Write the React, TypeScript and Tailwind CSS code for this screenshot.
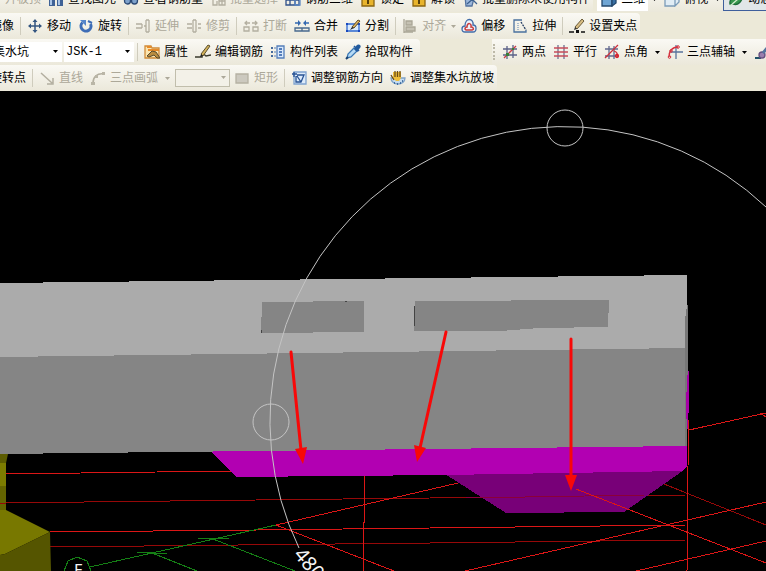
import React from "react";
import clsx from "clsx";

type IconProps = { children: React.ReactNode };

const Svg = ({ children }: IconProps) => (
  <svg viewBox="0 0 16 16" className="size-4 shrink-0" fill="none" strokeWidth="1.3" aria-hidden="true">
    {children}
  </svg>
);

const icons: Record<string, React.ReactNode> = {
  blank: null,
  binoculars: (
    <>
      <path d="M1 5h6v10H1zM9 5h6v10H9z" fill="#3f6296" />
      <path d="M3 7v7M11 7v7" stroke="#a9c4e6" strokeWidth="2" />
      <path d="M6 8h4" stroke="#24406c" strokeWidth="2" />
    </>
  ),
  glasses: (
    <>
      <circle cx="4.500" cy="10" r="3" fill="#7ea2cc" stroke="#2c4a75" />
      <circle cx="11.500" cy="10" r="3" fill="#7ea2cc" stroke="#2c4a75" />
      <path d="M7 9h2" stroke="#2c4a75" strokeWidth="2" />
    </>
  ),
  batch: <path d="M1 2h6v6H1zM9 6h6v8H9zM3 9v5h4v-4M9 10h6M12 6v8" stroke="#b3afa0" />,
  beam: (
    <>
      <path d="M1 3h13v11H1zM5 3v11M10 3v11M1 9h13" stroke="#31518a" />
      <path d="M10 8h5v6h-5z" stroke="#5c88c4" />
    </>
  ),
  lock: (
    <>
      <path d="M5 7V4a3 3 0 0 1 6 0v3" stroke="#96721a" />
      <path d="M2 6h12v9H2z" fill="#e8b42c" stroke="#8b6511" />
      <path d="M3 8h9" stroke="#fbe38b" />
      <path d="M8 9v4" stroke="#57400b" strokeWidth="2" />
    </>
  ),
  trash: (
    <>
      <path d="M3 5l9 2-2 8H4z" fill="#9db8dc" stroke="#54739f" />
      <path d="M9 7l6 6M5 13l8-7" stroke="#3d618f" />
    </>
  ),
  cube: (
    <>
      <path d="M1 5l4-3h10l-4 3z" fill="#c9e3f6" stroke="#24486d" />
      <path d="M1 5h10v10H1z" fill="#6fa5d4" stroke="#24486d" />
      <path d="M11 5l4-3v10l-4 3z" fill="#3870a5" stroke="#24486d" />
    </>
  ),
  topview: (
    <>
      <path d="M1 7l4-4h10l-4 4z" fill="#7fb1d6" stroke="#6289ad" />
      <path d="M1 7h10v8H1zM11 7l4-4v8l-4 4z" fill="#e1edf5" stroke="#7c9cb8" />
    </>
  ),
  orbit: (
    <>
      <path d="M2 13C1 7 7 5 14 4c1 6-4 11-9 9z" fill="#36974d" stroke="#1d6c39" />
      <path d="M2 15l8-7" stroke="#d3efcf" />
    </>
  ),
  move: (
    <>
      <path d="M8 2v12M2 8h12" stroke="#345681" strokeWidth="1.500" />
      <path d="M5.500 4L8 1l2.500 3zM5.500 12L8 15l2.500-3zM4 5.500L1 8l3 2.500zM12 5.500L15 8l-3 2.500z" fill="#345681" />
    </>
  ),
  rotate: (
    <>
      <path d="M4.500 4.500a5 5 0 1 0 8 1.500" stroke="#3e6db6" strokeWidth="3" />
      <path d="M2 2h6v6z" fill="#5585ca" />
      <path d="M10 3l4 2" stroke="#3e6db6" strokeWidth="2" />
    </>
  ),
  extend: <path d="M1 6h6M1 10h6M7 6v4M9 8h2M11 2v12M14 2v12M11 2h3M11 14h3" stroke="#b3afa0" />,
  trim: <path d="M1 6h5M1 10h5M7 2v12M10 2v12M7 2h3M7 14h3M12 6h3M12 10h3" stroke="#b3afa0" />,
  breakOff: <path d="M1 9h5v4H1zM10 9h5v4h-5zM2 5h5M9 5h5M4 3L2 5l2 2M12 3l2 2-2 2" stroke="#b3afa0" />,
  merge: (
    <>
      <path d="M1 10h14v3H1zM8 10v3" stroke="#48698e" />
      <path d="M1 5h5M10 5h5" stroke="#3569b0" strokeWidth="1.500" />
      <path d="M4 2l3 3-3 3zM12 2L9 5l3 3z" fill="#3569b0" />
    </>
  ),
  split: (
    <>
      <path d="M2 6h12v7H2z" fill="#dbeafb" stroke="#2e68d0" />
      <path d="M1 5h2v2H1zM13 5h2v2h-2zM1 12h2v2H1zM13 12h2v2h-2z" fill="#1848bd" />
      <path d="M7 9l6-7 2 1-6 7z" fill="#dfb65e" stroke="#614c24" strokeWidth="1" />
      <path d="M5 12l2-3 2 1z" fill="#222" />
    </>
  ),
  align: (
    <>
      <path d="M2 1v14M2 14h9" stroke="#aaa696" />
      <path d="M4 3h6v4H4zM4 9h9v4H4z" fill="#c5c1b3" stroke="#aaa696" />
    </>
  ),
  offset: (
    <>
      <path d="M1 11c0-2 1-3 3-3 0-9 9-8 8-1 4 0 4 7 0 7H4c-2 0-3-1-3-3z" fill="#edf3fb" stroke="#426ca8" />
      <path d="M4 11c0-1 1-2 2-2 0-5 5-4 4 0 3 0 3 3 1 3H5z" stroke="#c93c3c" strokeWidth="1.500" />
    </>
  ),
  stretch: (
    <>
      <path d="M10 2H2v12h12v-2" stroke="#4b719f" />
      <path d="M9 4l5 8" stroke="#263e63" strokeDasharray="2 1" />
      <path d="M6 5v8" stroke="#7f9cc0" strokeDasharray="1 1" />
    </>
  ),
  grip: (
    <>
      <path d="M0 14h5M12 14h4" stroke="#111" />
      <path d="M7 12h3v3H7z" fill="#111" />
      <path d="M6 9l7-8 2 2-7 8z" fill="#d8bd83" stroke="#6b5c3b" strokeWidth="1" />
      <path d="M5 12l1-3 2 2z" fill="#333" />
    </>
  ),
  props: (
    <>
      <path d="M1 2h6l1 2h7v10H1z" fill="#fbe5af" stroke="#d08b39" />
      <path d="M4 6h11M3 3h4" stroke="#e78a29" strokeWidth="2" />
      <path d="M3 12l5-5 4 1 4 6h-3l-3-3-5 2z" fill="#b98c40" stroke="#574a2c" strokeWidth="1" />
    </>
  ),
  editBar: (
    <>
      <path d="M0 13h7c0-3 2-3 4-1l5-1" stroke="#3a3a2c" strokeWidth="1.500" />
      <path d="M6 10l7-9 2 1-7 10z" fill="#d2b15a" stroke="#5c502d" strokeWidth="1" />
      <path d="M5 13l1-3 2 2z" fill="#222" />
    </>
  ),
  list: (
    <>
      <path d="M7 2h7v12H7z" fill="#d9e9fb" stroke="#557fba" />
      <path d="M9 5h3M9 8h3M9 11h3" stroke="#295aa6" />
      <path d="M1 3h2v2H1zM1 7h2v2H1zM1 11h2v2H1z" fill="#456b9d" />
      <path d="M4 4h2M4 8h2M4 12h2" stroke="#8ca5c6" />
    </>
  ),
  pick: (
    <>
      <path d="M2 14l1-4 6-6 3 3-6 6z" fill="#b6daf5" stroke="#3b79b5" />
      <path d="M9 2l5 5M10 5l2-3c2-2 4 0 2 2l-2 3z" fill="#235b9e" stroke="#235b9e" strokeWidth="1.500" />
      <path d="M1 15l2-2" stroke="#1a416f" strokeWidth="2" />
    </>
  ),
  twoPoint: (
    <>
      <path d="M5 2v13M11 1v13M1 5h14M1 11h14" stroke="#5b6288" />
      <path d="M2 14L14 2" stroke="#cc3d46" />
      <path d="M4 9h3v3H4zM10 4h2v2h-2z" fill="#397f35" />
    </>
  ),
  parallel: (
    <>
      <path d="M5 1v14M11 1v14" stroke="#6d7191" />
      <path d="M1 4h14M1 8h14M1 12h14" stroke="#c64c5b" />
    </>
  ),
  angle: (
    <>
      <path d="M5 2v13M10 2v13M1 5h13M1 12h13" stroke="#61688e" />
      <path d="M1 14L14 1M10 7c3 1 4 3 3 6" stroke="#cf303b" />
      <circle cx="13" cy="12" r="1.500" stroke="#dc1d29" />
    </>
  ),
  threeAxis: (
    <>
      <path d="M9 1v14M4 8h12" stroke="#58739c" />
      <path d="M2 13c0-6 3-10 9-10" stroke="#d5303d" />
      <circle cx="2.500" cy="13" r="1.300" stroke="#d5303d" strokeWidth="1" />
      <circle cx="4" cy="7" r="1.300" stroke="#d5303d" strokeWidth="1" />
      <circle cx="11" cy="3" r="1.300" stroke="#d5303d" strokeWidth="1" />
    </>
  ),
  eraser: (
    <>
      <path d="M1 14h6" stroke="#205268" strokeWidth="2" />
      <circle cx="8" cy="11" r="3" fill="#9a7fae" stroke="#654f80" />
      <path d="M9 9l5-6" stroke="#54749e" strokeWidth="3" />
    </>
  ),
  line: <path d="M2 3l11 10M14 8v6H8" stroke="#b3afa0" strokeWidth="1.500" />,
  arc: (
    <>
      <path d="M3 13C3 7 7 3 14 4" stroke="#b3afa0" strokeWidth="1.500" />
      <path d="M1 12h4v3H1zM5 5h3v3H5zM12 2h3v3h-3z" fill="#bab6a7" />
    </>
  ),
  rect: <path d="M2 4h12v9H2z" fill="#ccc9bf" stroke="#b5b1a3" />,
  direction: (
    <>
      <path d="M3 2h12v12H3z" fill="#ddebfa" stroke="#7fa3cf" />
      <path d="M1 4h5M3 2v5M5 6v6h5l3-7H6M10 12L6 6" stroke="#285394" />
    </>
  ),
  slope: (
    <>
      <path d="M1 8h14c0 8-14 8-14 0z" fill="#c6dcf0" stroke="#7fa2c8" />
      <path d="M4 13h1M7 14h1M10 13h1M12 11h1" stroke="#28588f" />
      <path d="M3 2h8v6l-2 3H6L3 8z" fill="#efbe39" />
      <path d="M1 5l3 5M5 1v6M7.500 1v6M10 1v6" stroke="#6b4d18" />
    </>
  ),
};

type ToolProps = {
  icon: string;
  label: string;
  disabled?: boolean;
  className?: string;
};

const Tool = ({ icon, label, disabled, className }: ToolProps) => (
  <button
    type="button"
    disabled={disabled}
    className={clsx("flex h-6 shrink-0 items-center gap-1 whitespace-nowrap pl-1 pr-[3px]", disabled && "text-[#aca899]", className)}
  >
    <Svg>{icons[icon]}</Svg>
    <span>{label}</span>
  </button>
);

const Arrow = () => (
  <svg viewBox="0 0 5 3" className="h-[3px] w-[5px]" fill="currentColor" aria-hidden="true">
    <path d="M0 0h5L2.500 3z" />
  </svg>
);

const More = ({ label, disabled, narrow }: { label: string; disabled?: boolean; narrow?: boolean }) => (
  <button
    type="button"
    aria-label={label}
    disabled={disabled}
    className={clsx("flex h-6 shrink-0 items-center justify-center", narrow ? "w-2" : "w-3", disabled && "text-[#aca899]")}
  >
    <Arrow />
  </button>
);

const Divider = () => (
  <div className="flex w-[6px] shrink-0 justify-center">
    <div className="h-[18px] w-px bg-[#cfccbd]" />
  </div>
);

const Bar = ({ children, className }: { children: React.ReactNode; className?: string }) => (
  <div className={clsx("flex h-[26px] shrink-0 items-center rounded-r-sm bg-linear-to-b from-[#faf9f4] to-[#ebe8da]", className)}>{children}</div>
);

type PickerProps = { label: string; options: string[]; className: string; selectClass: string };

const Picker = ({ label, options, className, selectClass }: PickerProps) => (
  <div className={clsx("relative shrink-0 bg-white", className)}>
    <select aria-label={label} className={clsx("block h-5 w-full appearance-none", selectClass)}>
      {options.map((option) => (
        <option key={option}>{option}</option>
      ))}
    </select>
    <span className="pointer-events-none absolute right-1 top-2">
      <Arrow />
    </span>
  </div>
);

const Toolbars = () => (
  <header className="shrink-0 overflow-hidden bg-[#ece9d8]">
    <div className="-mt-[14px] flex h-[27px] items-start">
      <Bar className="-ml-[19px]">
        <Tool icon="blank" label="升板顶" disabled />
        <Tool icon="binoculars" label="查找图元" />
        <Tool icon="glasses" label="查看钢筋量" />
        <Tool icon="batch" label="批量选择" disabled />
        <Tool icon="beam" label="钢筋三维" />
        <Tool icon="lock" label="锁定" />
        <Tool icon="lock" label="解锁" />
        <Tool icon="trash" label="批量删除未使用构件" />
      </Bar>
      <Bar className="ml-1">
        <Tool icon="cube" label="三维" className="bg-white" />
        <More label="三维选项" />
        <Tool icon="topview" label="俯视" />
        <More label="俯视选项" />
        <Tool icon="orbit" label="动态观察" className="border border-[#3f5f9c] bg-[#e1e6e8]" />
      </Bar>
    </div>
    <div className="flex">
      <Bar className="-ml-[34px]">
        <Tool icon="blank" label="镜像" />
        <Divider />
        <Tool icon="move" label="移动" />
        <Tool icon="rotate" label="旋转" />
        <Divider />
        <Tool icon="extend" label="延伸" disabled />
        <Tool icon="trim" label="修剪" disabled />
        <Divider />
        <Tool icon="breakOff" label="打断" disabled />
        <Tool icon="merge" label="合并" />
        <Tool icon="split" label="分割" />
        <Divider />
        <Tool icon="align" label="对齐" disabled />
        <More label="对齐选项" disabled narrow />
        <Tool icon="offset" label="偏移" />
        <Tool icon="stretch" label="拉伸" />
        <Divider />
        <Tool icon="grip" label="设置夹点" />
      </Bar>
    </div>
    <div className="flex">
      <Bar className="-ml-3 pr-1">
        <Picker label="构件类型" options={["集水坑", "筏板基础"]} className="w-[74px]" selectClass="pl-[5px]" />
        <Picker
          label="构件名称"
          options={["JSK-1", "JSK-2"]}
          className="ml-[2px] w-[70px]"
          selectClass="pl-[2px] font-['Liberation_Mono',monospace]"
        />
        <Divider />
        <Tool icon="props" label="属性" />
        <Tool icon="editBar" label="编辑钢筋" />
        <Tool icon="list" label="构件列表" />
        <Tool icon="pick" label="拾取构件" />
      </Bar>
      <Bar className="ml-[72px] grow">
        <div className="mr-[3px] h-4 w-[3px] border-r-2 border-dotted border-[#bdb9a8]" />
        <Tool icon="twoPoint" label="两点" />
        <Tool icon="parallel" label="平行" />
        <Tool icon="angle" label="点角" />
        <More label="点角选项" />
        <Tool icon="threeAxis" label="三点辅轴" />
        <More label="三点辅轴选项" />
        <Tool icon="eraser" label="删除辅轴" />
      </Bar>
    </div>
    <div className="flex">
      <Bar className="-ml-[34px]">
        <Tool icon="blank" label="旋转点" />
        <Divider />
        <Tool icon="line" label="直线" disabled />
        <Tool icon="arc" label="三点画弧" disabled />
        <More label="三点画弧选项" disabled />
        <div className="relative ml-[2px] w-[55px] shrink-0 text-[#aca899]">
          <select aria-label="画弧方式" disabled className="block h-[18px] w-full appearance-none border border-[#c1beac] bg-[#f3f1e8]" />
          <span className="pointer-events-none absolute right-1 top-[7px]">
            <Arrow />
          </span>
        </div>
        <Tool icon="rect" label="矩形" disabled />
        <Divider />
        <Tool icon="direction" label="调整钢筋方向" />
        <Tool icon="slope" label="调整集水坑放坡" />
      </Bar>
    </div>
  </header>
);

const Scene = () => (
  <svg
    viewBox="0 91 766 480"
    preserveAspectRatio="xMinYMin slice"
    className="min-h-0 w-full flex-1 bg-black"
    fill="none"
    role="img"
    aria-label="集水坑三维视图"
  >
    {/* axis grid */}
    <g shapeRendering="crispEdges">
      <path d="M0 503L256 500L430 498L686 495M49 547L430 543L686 540M664 484L766 525" stroke="#960808" />
      <path
        d="M6 474L232 471M50 532L256 530L430 528L686 525M365 475L363 571M276 525L458 483M276 525L394 571M465 571L766 502M636 571L766 541M689 430L766 413M760 413L766 417"
        stroke="#dc1616"
      />
      <path d="M90 567L276 525M137 552L167 554M198 538L229 539M152 553L197 571M213 539L295 571" stroke="#158015" />
      <path d="M64 571L68 561L77 557L87 561L91 571" stroke="#158015" />
    </g>

    {/* column at the left */}
    <path d="M0 454h8l-2 9H0z" fill="#5c5c00" />
    <path d="M0 463h6v23H0z" fill="#7c7c00" />
    <path d="M0 486h6v24H0z" fill="#646400" />
    <path d="M0 510h6l44 22-45 22-5 1z" fill="#787800" />
    <path d="M50 532l1 39H0v-16l5-1z" fill="#555500" />
    <path d="M0 503h6" stroke="#960808" shapeRendering="crispEdges" />

    {/* slab and pit */}
    <g shapeRendering="crispEdges">
      <path d="M445 474L684 470L624 512L506 513z" fill="#780078" />
      <path d="M210 451L687 440V467L682 471L445 475L237 477z" fill="#b200b2" />
      <path d="M0 350L686 340V446L0 454z" fill="#858585" />
      <path d="M0 283L687 275V348L0 357z" fill="#ababab" />
      <path d="M687 305H688V400L687 446H685V320z" fill="#777777" />
      <path d="M688 367L689 375V405L687 437L686 400z" fill="#a600a6" />
      <path d="M262 302L364 301V332L261 333z" fill="#858585" />
      <path d="M415 301L609 300L608 327L540 328L500 331L414 331z" fill="#858585" />
      <path d="M345 301h2M261 330v3M414 306v20" stroke="#444444" />
      <path d="M466 498L645 495" stroke="#8c0038" />
      <path d="M576 489L766 563" stroke="#dc1616" />
      <path d="M689 420L688 466L687 571" stroke="#dc1616" />
    </g>

    {/* orbit ring */}
    <g stroke="#c4c4c4">
      <path d="M766 207A294 294 0 0 0 299 548" />
      <circle cx="565" cy="128" r="18" />
      <circle cx="271" cy="422" r="18" />
    </g>

    <g stroke="#f80808" strokeWidth="3" fill="#f80808">
      <path d="M291 352L301 450M446 332L420 448M571 339V476" strokeLinecap="round" />
      <path d="M295 449L307 447L303 464zM414 445L426 448L417 462zM565 475H577L571 491z" stroke="none" />
    </g>

    <g fill="#f4f4f4" className="font-['Noto_Sans',sans-serif]">
      <text x="74" y="576" className="text-[16px]">
        E
      </text>
      <text transform="translate(293 555) rotate(50)" className="text-[20px]">
        480
      </text>
    </g>
  </svg>
);

const App = () => {
  return (
    <main className="flex h-screen flex-col overflow-hidden bg-black text-[12px] leading-4 text-black font-['Liberation_Sans','Noto_Sans_CJK_SC',sans-serif]">
      <Toolbars />
      <Scene />
    </main>
  );
};

export default App;
